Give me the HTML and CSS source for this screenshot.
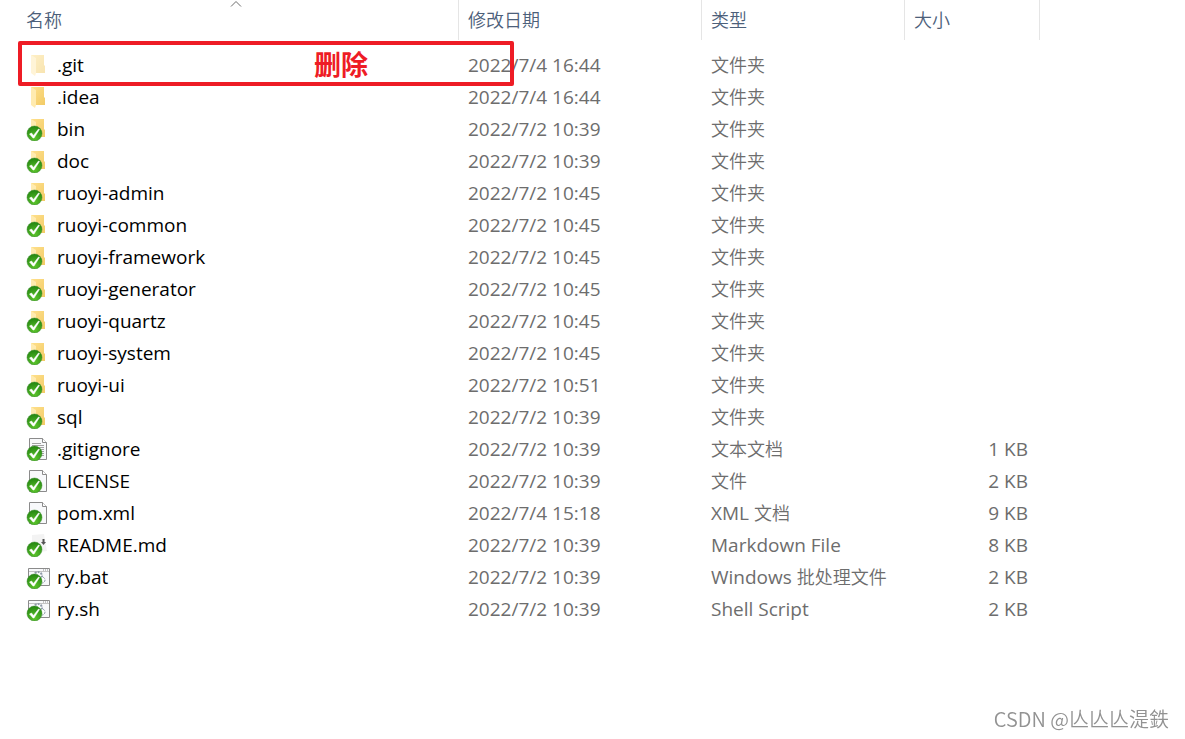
FILE: index.html
```html
<!DOCTYPE html>
<html lang="zh-CN">
<head>
  <meta charset="UTF-8">
  <meta name="viewport" content="width=device-width, initial-scale=1">
  <title>RuoYi-Vue</title>
  <link rel="stylesheet" href="styles.css">
</head>
<body>
  <!-- 图标定义 -->
  <svg class="defs" aria-hidden="true">
    <defs>
      <linearGradient id="gold" x1="0" x2="1" y1="0" y2="1">
        <stop offset="0" stop-color="#ffe08c"/>
        <stop offset="1" stop-color="#f2cb66"/>
      </linearGradient>
      <radialGradient id="green" cx="0.5" cy="0.8" r="0.8">
        <stop offset="0" stop-color="#5cc42c"/>
        <stop offset="1" stop-color="#238510"/>
      </radialGradient>
      <symbol id="folder" viewBox="0 0 24 24">
        <path d="M5 2h13v10l1 1v7H9z" fill="url(#gold)"/>
        <path d="M5 2l5 3v15l-1 3-4-3z" fill="#ffebb0"/>
      </symbol>
      <symbol id="ok" viewBox="0 0 24 24">
        <circle cx="8.5" cy="16.5" r="7.5" fill="url(#green)" stroke="#3b8a2c" stroke-width="0.5"/>
        <path d="M3.5 17l2-1 2 2.500 5-6.500 1 .5-5.500 8.500h-1z" fill="#fff" stroke="#fff" stroke-width="0.5"/>
      </symbol>
      <symbol id="page" viewBox="0 0 24 24">
        <path d="M3.5 1.5h13l4 4v17h-17z" fill="#f8f9fb" stroke="#8b8b8b"/>
        <path d="M16.5 1.5v4h4" fill="#fff" stroke="#8b8b8b"/>
      </symbol>
      <symbol id="lines" viewBox="0 0 24 24">
        <path d="M6 6.5h9M6 8.5h12M6 10.5h12M6 12.5h12M6 14.5h12M6 16.5h12M6 18.5h12" stroke="#a2a2a2"/>
      </symbol>
      <symbol id="md" viewBox="0 0 24 24">
        <path d="M6 2l12-1 3 17-15 2z" fill="#f3f3f3"/>
        <path d="M17.5 6v4" stroke="#555" stroke-width="2"/>
        <path d="M15 9h5l-2.500 3z" fill="#555"/>
      </symbol>
      <symbol id="script" viewBox="0 0 24 24">
        <path d="M2.5 3.5h21v17h-21z" fill="#f8f9fb" stroke="#8b8b8b"/>
        <path d="M3 6.5h20" stroke="#c4c4c4"/>
        <path d="M17 5h5" stroke="#8b8b8b" stroke-dasharray="1 1"/>
        <circle cx="12" cy="11" r="4" fill="#fff" stroke="#8e9aa8" stroke-width="2" stroke-dasharray="2 1"/>
        <circle cx="16" cy="15" r="3" fill="#fff" stroke="#8e9aa8" stroke-dasharray="2 1"/>
      </symbol>
    </defs>
  </svg>

  <main class="explorer">
    <table class="files">
      <colgroup>
        <col class="col-name">
        <col class="col-date">
        <col class="col-type">
        <col class="col-size">
      </colgroup>
      <thead>
        <tr>
          <th>名称<svg class="sort" viewBox="0 0 14 8" aria-hidden="true"><path d="M2 6.5l5-5 5 5"/></svg></th>
          <th>修改日期</th>
          <th>类型</th>
          <th>大小</th>
        </tr>
      </thead>
      <tbody id="rows"></tbody>
    </table>
    <div class="mark">删除</div>
  </main>
  <div class="watermark">CSDN @亾亾亾湜鉄</div>

  <script src="files.js"></script>
</body>
</html>
```
FILE: styles.css
```css
body {
  margin: 0;
  min-height: 100vh;
  background: #fff;
  color: #000;
  font-family: "Open Sans", "Noto Sans CJK SC", sans-serif;
  font-size: 19px;
}
.defs {
  position: absolute;
  width: 0;
  height: 0;
}
.explorer {
  position: relative;
}

/* Liste des fichiers */
.files {
  width: 1040px;
  table-layout: fixed;
  border-collapse: separate;
  border-spacing: 0;
}
.col-name { width: 459px; }
.col-date { width: 243px; }
.col-type { width: 203px; }
.col-size { width: 135px; }
.files th {
  position: relative;
  height: 40px;
  padding: 0 9px;
  border-right: 1px solid #e5e5e5;
  box-sizing: border-box;
  color: #4c607a;
  font-size: 18px;
  font-weight: 350;
  line-height: 24px;
  text-align: left;
}
.files th:first-child {
  padding-left: 26px;
}
.sort {
  position: absolute;
  top: 0;
  left: 50%;
  width: 14px;
  height: 8px;
  fill: none;
  stroke: #6d6d6d;
}
.files tbody::before {
  content: "";
  display: block;
  height: 9px;
}
.files td {
  height: 32px;
  padding: 0 9px;
  color: #6d6d6d;
  line-height: 24px;
  white-space: nowrap;
}
.files .name {
  padding-left: 26px;
  color: #000;
}
.name-box {
  display: flex;
  align-items: center;
  gap: 7px;
}
.icon {
  width: 24px;
  height: 24px;
}
.hidden-item .icon {
  opacity: 0.5;
}
.files .size {
  padding-right: 12px;
  text-align: right;
}
.zh {
  font-size: 18px;
  font-weight: 350;
}

/* Cadre rouge au-dessus de la première ligne */
.mark {
  position: absolute;
  top: 41px;
  left: 18px;
  width: 496px;
  height: 45px;
  padding-left: 292px;
  border: 4px solid #ee1c25;
  border-radius: 2px;
  box-sizing: border-box;
  color: #ee1c25;
  font-size: 27px;
  font-weight: 700;
  line-height: 40px;
  pointer-events: none;
}

.watermark {
  position: fixed;
  right: 16px;
  bottom: 6px;
  color: #929292;
  font-family: "Noto Sans CJK SC", sans-serif;
  font-size: 20px;
  font-weight: 350;
  line-height: 28px;
}
```
FILE: files.js
```js
const files = [
  ['.git', '2022/7/4 16:44', '文件夹', '', 'folder', 'hidden'],
  ['.idea', '2022/7/4 16:44', '文件夹', '', 'folder', 'plain'],
  ['bin', '2022/7/2 10:39', '文件夹', '', 'folder'],
  ['doc', '2022/7/2 10:39', '文件夹', '', 'folder'],
  ['ruoyi-admin', '2022/7/2 10:45', '文件夹', '', 'folder'],
  ['ruoyi-common', '2022/7/2 10:45', '文件夹', '', 'folder'],
  ['ruoyi-framework', '2022/7/2 10:45', '文件夹', '', 'folder'],
  ['ruoyi-generator', '2022/7/2 10:45', '文件夹', '', 'folder'],
  ['ruoyi-quartz', '2022/7/2 10:45', '文件夹', '', 'folder'],
  ['ruoyi-system', '2022/7/2 10:45', '文件夹', '', 'folder'],
  ['ruoyi-ui', '2022/7/2 10:51', '文件夹', '', 'folder'],
  ['sql', '2022/7/2 10:39', '文件夹', '', 'folder'],
  ['.gitignore', '2022/7/2 10:39', '文本文档', '1 KB', 'page lines'],
  ['LICENSE', '2022/7/2 10:39', '文件', '2 KB', 'page'],
  ['pom.xml', '2022/7/4 15:18', 'XML 文档', '9 KB', 'page'],
  ['README.md', '2022/7/2 10:39', 'Markdown File', '8 KB', 'md'],
  ['ry.bat', '2022/7/2 10:39', 'Windows 批处理文件', '2 KB', 'script'],
  ['ry.sh', '2022/7/2 10:39', 'Shell Script', '2 KB', 'script']
];

const rows = document.getElementById('rows');

files.forEach(([name, date, type, size, icon, state]) => {
  const parts = icon.split(' ');
  // coche verte pour les éléments suivis
  if (!state) parts.push('ok');
  const uses = parts.map(id => `<use href="#${id}"/>`).join('');
  const label = type.replace(/[\u4e00-\u9fff]+/g, '<span class="zh">$&</span>');
  const tr = document.createElement('tr');
  if (state === 'hidden') tr.className = 'hidden-item';
  tr.innerHTML = `
    <td class="name"><div class="name-box"><svg class="icon" viewBox="0 0 24 24" aria-hidden="true">${uses}</svg><span>${name}</span></div></td>
    <td>${date}</td>
    <td>${label}</td>
    <td class="size">${size}</td>`;
  rows.appendChild(tr);
});
```
